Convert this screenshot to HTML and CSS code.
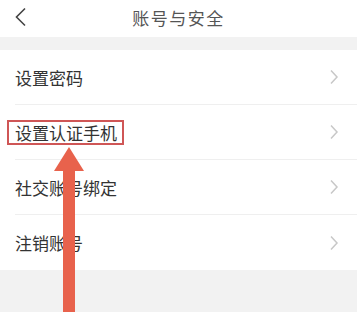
FILE: index.html
```html
<!DOCTYPE html>
<html lang="zh-CN">
<head>
<meta charset="utf-8">
<title>账号与安全</title>
<link rel="stylesheet" href="styles.css">
</head>
<body>
<div class="page">
  <header class="topbar">
    <svg class="back" width="14" height="20" viewBox="0 0 14 20"><path d="M11 1.5 L2.5 10 L11 18.5" fill="none" stroke="#444" stroke-width="1.6"/></svg>
    <div class="title">账号与安全</div>
  </header>
  <div class="gap"></div>
  <ul class="list">
    <li class="row"><span class="label">设置密码</span><svg class="chev" width="10" height="16" viewBox="0 0 10 16"><path d="M2 1.5 L8 8 L2 14.5" fill="none" stroke="#c8c8c8" stroke-width="1.5"/></svg></li>
    <li class="row"><span class="label boxed">设置认证手机</span><svg class="chev" width="10" height="16" viewBox="0 0 10 16"><path d="M2 1.5 L8 8 L2 14.5" fill="none" stroke="#c8c8c8" stroke-width="1.5"/></svg></li>
    <li class="row"><span class="label">社交账号绑定</span><svg class="chev" width="10" height="16" viewBox="0 0 10 16"><path d="M2 1.5 L8 8 L2 14.5" fill="none" stroke="#c8c8c8" stroke-width="1.5"/></svg></li>
    <li class="row"><span class="label">注销账号</span><svg class="chev" width="10" height="16" viewBox="0 0 10 16"><path d="M2 1.5 L8 8 L2 14.5" fill="none" stroke="#c8c8c8" stroke-width="1.5"/></svg></li>
  </ul>
  <svg class="arrow" width="40" height="170" viewBox="0 0 40 170">
    <polygon points="17,0 2,24 11,24 11,170 23,170 23,24 32,24" fill="#e8624c"/>
  </svg>
</div>
</body>
</html>
```
FILE: styles.css
```css
* { box-sizing: border-box; }
html, body { margin: 0; padding: 0; }
body {
  background: #f2f2f2;
  font-family: "Noto Sans CJK SC", "Noto Sans", sans-serif;
  color: #333;
}
.page {
  position: relative;
  width: 357px;
  height: 312px;
  overflow: hidden;
}
.topbar {
  position: relative;
  height: 37px;
  background: #fff;
  display: flex;
  align-items: center;
  justify-content: center;
}
.back {
  position: absolute;
  left: 14px;
  top: 7px;
}
.title {
  font-size: 17px;
  color: #555;
  line-height: 1;
  margin-top: -2px;
  letter-spacing: 1.5px;
}
.gap { height: 13px; }
.list {
  list-style: none;
  margin: 0;
  padding: 0 0 0 15px;
  background: #fff;
}
.row {
  height: 55px;
  display: flex;
  align-items: center;
  justify-content: space-between;
  padding-right: 18px;
  border-bottom: 1px solid #efefef;
}
.row:last-child { border-bottom: none; }
.label {
  font-size: 17px;
  line-height: 1;
  color: #333;
}
.boxed {
  margin-left: -8px;
  padding: 2px 5px 2px 6px;
  border: 2px solid #cf5656;
}
.chev { display: block; }
.arrow {
  position: absolute;
  left: 52px;
  top: 147px;
}
```
